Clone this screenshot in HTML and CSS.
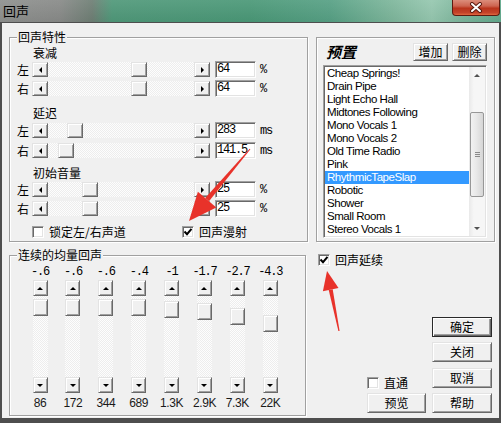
FILE: index.html
```html
<!DOCTYPE html>
<html lang="zh-CN">
<head>
<meta charset="utf-8">
<title>回声</title>
<link rel="stylesheet" href="styles.css">
</head>
<body>
<div class="window">
  <div class="titlebar">
    <span class="title">回声</span>
    <div class="close">
      <svg width="14" height="11" viewBox="0 0 14 11"><path d="M3 2 L11 9 M11 2 L3 9" stroke="#5a1a10" stroke-width="4" stroke-linecap="round"/><path d="M3 2 L11 9 M11 2 L3 9" stroke="#fff" stroke-width="2" stroke-linecap="round"/></svg>
    </div>
  </div>
  <div class="client">
    <div class="left-col">
      <fieldset class="group g-echo">
        <legend>回声特性</legend>
        <div class="section">
          <div class="sec-label">衰减</div>
          <div class="row">
            <span class="side">左</span>
            <div class="hscroll"><span class="sbtn raised a-left"></span><div class="htrack"><span class="thumb raised" style="margin-left:83px"></span></div><span class="sbtn raised a-right"></span></div>
            <span class="textbox">64</span><span class="unit">%</span>
          </div>
          <div class="row">
            <span class="side">右</span>
            <div class="hscroll"><span class="sbtn raised a-left"></span><div class="htrack"><span class="thumb raised" style="margin-left:83px"></span></div><span class="sbtn raised a-right"></span></div>
            <span class="textbox">64</span><span class="unit">%</span>
          </div>
        </div>
        <div class="section section-loose">
          <div class="sec-label">延迟</div>
          <div class="row">
            <span class="side">左</span>
            <div class="hscroll"><span class="sbtn raised a-left"></span><div class="htrack"><span class="thumb raised" style="margin-left:19px"></span></div><span class="sbtn raised a-right"></span></div>
            <span class="textbox">283</span><span class="unit">ms</span>
          </div>
          <div class="row">
            <span class="side">右</span>
            <div class="hscroll"><span class="sbtn raised a-left"></span><div class="htrack"><span class="thumb raised" style="margin-left:10px"></span></div><span class="sbtn raised a-right"></span></div>
            <span class="textbox">141.5</span><span class="unit">ms</span>
          </div>
        </div>
        <div class="section">
          <div class="sec-label">初始音量</div>
          <div class="row">
            <span class="side">左</span>
            <div class="hscroll"><span class="sbtn raised a-left"></span><div class="htrack"><span class="thumb raised" style="margin-left:34px"></span></div><span class="sbtn raised a-right"></span></div>
            <span class="textbox">25</span><span class="unit">%</span>
          </div>
          <div class="row">
            <span class="side">右</span>
            <div class="hscroll"><span class="sbtn raised a-left"></span><div class="htrack"><span class="thumb raised" style="margin-left:34px"></span></div><span class="sbtn raised a-right"></span></div>
            <span class="textbox">25</span><span class="unit">%</span>
          </div>
        </div>
        <div class="check-row">
          <label class="check check-wide"><span class="cbox"></span><span>锁定左/右声道</span></label>
          <label class="check"><span class="cbox"><svg width="10" height="10" viewBox="0 0 10 10"><path d="M1.5 4.5 L4 7.2 L8.5 1.8" fill="none" stroke="#000" stroke-width="2"/></svg></span><span>回声漫射</span></label>
        </div>
      </fieldset>

      <fieldset class="group g-eq">
        <legend>连续的均量回声</legend>
        <div class="eq">
          <div class="band"><span class="band-val">-.6</span><div class="vscroll"><span class="vbtn raised a-up"></span><div class="vtrack"><span class="vthumb raised" style="margin-top:3px"></span></div><span class="vbtn raised a-down"></span></div><span class="band-freq">86</span></div>
          <div class="band"><span class="band-val">-.6</span><div class="vscroll"><span class="vbtn raised a-up"></span><div class="vtrack"><span class="vthumb raised" style="margin-top:3px"></span></div><span class="vbtn raised a-down"></span></div><span class="band-freq">172</span></div>
          <div class="band"><span class="band-val">-.6</span><div class="vscroll"><span class="vbtn raised a-up"></span><div class="vtrack"><span class="vthumb raised" style="margin-top:3px"></span></div><span class="vbtn raised a-down"></span></div><span class="band-freq">344</span></div>
          <div class="band"><span class="band-val">-.4</span><div class="vscroll"><span class="vbtn raised a-up"></span><div class="vtrack"><span class="vthumb raised" style="margin-top:3px"></span></div><span class="vbtn raised a-down"></span></div><span class="band-freq">689</span></div>
          <div class="band"><span class="band-val">-1</span><div class="vscroll"><span class="vbtn raised a-up"></span><div class="vtrack"><span class="vthumb raised" style="margin-top:5px"></span></div><span class="vbtn raised a-down"></span></div><span class="band-freq">1.3K</span></div>
          <div class="band"><span class="band-val">-1.7</span><div class="vscroll"><span class="vbtn raised a-up"></span><div class="vtrack"><span class="vthumb raised" style="margin-top:7px"></span></div><span class="vbtn raised a-down"></span></div><span class="band-freq">2.9K</span></div>
          <div class="band"><span class="band-val">-2.7</span><div class="vscroll"><span class="vbtn raised a-up"></span><div class="vtrack"><span class="vthumb raised" style="margin-top:12px"></span></div><span class="vbtn raised a-down"></span></div><span class="band-freq">7.3K</span></div>
          <div class="band"><span class="band-val">-4.3</span><div class="vscroll"><span class="vbtn raised a-up"></span><div class="vtrack"><span class="vthumb raised" style="margin-top:19px"></span></div><span class="vbtn raised a-down"></span></div><span class="band-freq">22K</span></div>
        </div>
      </fieldset>
    </div>

    <div class="right-col">
      <div class="preset">
        <div class="preset-head">
          <span class="preset-title">预置</span>
          <span class="btn raised btn-add">增加</span>
          <span class="btn raised btn-del">删除</span>
        </div>
        <div class="list">
          <ul class="items">
            <li>Cheap Springs!</li>
            <li>Drain Pipe</li>
            <li>Light Echo Hall</li>
            <li>Midtones Following</li>
            <li>Mono Vocals 1</li>
            <li>Mono Vocals 2</li>
            <li>Old Time Radio</li>
            <li>Pink</li>
            <li class="sel">RhythmicTapeSlap</li>
            <li>Robotic</li>
            <li>Shower</li>
            <li>Small Room</li>
            <li>Stereo Vocals 1</li>
          </ul>
          <div class="lscroll">
            <span class="lbtn l-up"></span>
            <div class="ltrack"><span class="lthumb"></span></div>
            <span class="lbtn l-down"></span>
          </div>
        </div>
      </div>

      <label class="check cont-check"><span class="cbox"><svg width="10" height="10" viewBox="0 0 10 10"><path d="M1.5 4.5 L4 7.2 L8.5 1.8" fill="none" stroke="#000" stroke-width="2"/></svg></span><span>回声延续</span></label>

      <div class="bottom">
        <div class="bottom-left">
          <label class="check"><span class="cbox"></span><span>直通</span></label>
          <span class="btn raised wide">预览</span>
        </div>
        <div class="bottom-right">
          <span class="btn raised wide default">确定</span>
          <span class="btn raised wide">关闭</span>
          <span class="btn raised wide">取消</span>
          <span class="btn raised wide">帮助</span>
        </div>
      </div>
    </div>
  </div>
</div>

<svg class="annot" width="501" height="423" viewBox="0 0 501 423">
  <polygon points="205.2,198 209,201.2 250.4,149.3 249.6,148.7" fill="#e8322a"/>
  <polygon points="189,221 197.9,191.8 216.3,207.4" fill="#e8322a"/>
  <polygon points="328.7,290 332.7,289.2 339.6,330.9 338.4,331.1" fill="#e8322a"/>
  <polygon points="327,271 322.9,291.2 338.5,288" fill="#e8322a"/>
</svg>
</body>
</html>
```

FILE: styles.css
```css
* { box-sizing: border-box; }

html, body {
  margin: 0;
  padding: 0;
}

body {
  width: 501px;
  height: 423px;
  overflow: hidden;
  position: relative;
  background: #f0f0f0;
  font-family: "Noto Sans CJK SC", "Liberation Sans", sans-serif;
  font-size: 12px;
  color: #000;
}

.window {
  display: flex;
  flex-direction: column;
  width: 501px;
  height: 423px;
}

/* ---------- title bar ---------- */
.titlebar {
  flex: none;
  height: 22px;
  display: flex;
  align-items: flex-start;
  background:
    linear-gradient(180deg, rgba(255,255,255,0.08), rgba(0,0,0,0.04)),
    linear-gradient(90deg, #8e908e 0px, #888a88 60px, #6e7e74 92px, #4f9879 112px, #4a9877 250px, #56a084 330px, #7db69b 392px, #95c7af 432px, #7cb69c 462px, #62aa8d 501px);
}

.title {
  margin: 3px 0 0 3px;
  font-size: 13px;
  line-height: 15px;
}

.close {
  margin-left: auto;
  margin-right: 1px;
  width: 48px;
  height: 16px;
  border: 1px solid #5e1a10;
  border-top: none;
  border-radius: 0 0 4px 4px;
  background: linear-gradient(180deg, #dc8d7b 0%, #cd6450 40%, #b9341c 55%, #c4432a 85%, #e0683e 100%);
  display: flex;
  align-items: center;
  justify-content: center;
}

/* ---------- client ---------- */
.client {
  flex: 1;
  display: flex;
  gap: 8px;
  border-style: solid;
  border-color: #4e4e4e;
  border-width: 1px 2px 5px 2px;
  padding: 7px 0 2px 7px;
  background: #f0f0f0;
}

.left-col {
  width: 299px;
  display: flex;
  flex-direction: column;
}

.group {
  margin: 0;
  padding: 2px 0 0 7px;
  min-width: 0;
  border: 1px solid #a0a0a0;
  box-shadow: inset 1px 1px 0 #fff, 1px 1px 0 #fff;
}

.group legend {
  margin: 0;
  padding: 0 1px;
  font-size: 12px;
  line-height: 14px;
  background: #f0f0f0;
}

.g-echo {
  width: 299px;
  height: 212px;
}

.g-eq {
  width: 297px;
  height: 168px;
  margin-top: 6px;
  padding-top: 4px;
}

/* ---------- 3D look ---------- */
.raised {
  background: #f0f0f0;
  border: 1px solid;
  border-color: #e3e3e3 #696969 #696969 #e3e3e3;
  box-shadow: inset 1px 1px 0 #fff, inset -1px -1px 0 #a0a0a0;
}

/* ---------- echo sliders ---------- */
.section {
  display: flex;
  flex-direction: column;
}

.section + .section {
  margin-top: 9px;
}

.section-loose + .section {
  margin-top: 7px;
}

.sec-label {
  height: 14px;
  line-height: 14px;
  padding-left: 16px;
}

.row {
  display: flex;
  align-items: center;
  height: 17px;
  margin-top: 2px;
}

.sec-label + .row {
  margin-top: 1px;
}

.section-loose .sec-label + .row {
  margin-top: 2px;
}

.section-loose .row + .row {
  margin-top: 3px;
}

.side {
  width: 15px;
  line-height: 14px;
}

.hscroll {
  display: flex;
  width: 178px;
  height: 15px;
}

.sbtn {
  flex: none;
  width: 16px;
  height: 15px;
  display: flex;
  align-items: center;
  justify-content: center;
}

.sbtn::before,
.vbtn::before {
  content: "";
  width: 0;
  height: 0;
  border: 3px solid transparent;
}

.a-left::before { border-right-color: #000; border-left-width: 0; }
.a-right::before { border-left-color: #000; border-right-width: 0; }
.a-up::before { border-bottom-color: #000; border-top-width: 0; }
.a-down::before { border-top-color: #000; border-bottom-width: 0; }

.htrack {
  flex: 1;
  display: flex;
  background: repeating-conic-gradient(#ededed 0 25%, #fdfdfd 0 50%) 0 0 / 2px 2px;
}

.thumb {
  flex: none;
  width: 16px;
  height: 15px;
}

.textbox {
  width: 41px;
  height: 17px;
  margin-left: 5px;
  padding-left: 1px;
  background: #fff;
  border: 1px solid;
  border-color: #a0a0a0 #fff #fff #a0a0a0;
  box-shadow: inset 1px 1px 0 #696969, inset -1px -1px 0 #e3e3e3;
  font-family: "Liberation Mono", monospace;
  font-size: 12px;
  letter-spacing: -1.2px;
  line-height: 15px;
}

.unit {
  margin-left: 4px;
  font-family: "Liberation Mono", monospace;
  font-size: 12px;
  letter-spacing: -1.2px;
}

/* ---------- checkboxes ---------- */
.check-row {
  display: flex;
  margin-top: 8px;
  padding-left: 15px;
}

.check {
  display: flex;
  align-items: center;
  gap: 5px;
  line-height: 14px;
  height: 14px;
}

.check-wide {
  width: 150px;
}

.cbox {
  flex: none;
  width: 12px;
  height: 12px;
  background: #fff;
  border: 1px solid;
  border-color: #a0a0a0 #fff #fff #a0a0a0;
  box-shadow: inset 1px 1px 0 #696969, inset -1px -1px 0 #e3e3e3;
  display: flex;
  align-items: center;
  justify-content: center;
}

.cbox svg {
  display: block;
}

/* ---------- EQ ---------- */
.eq {
  display: grid;
  grid-template-columns: repeat(8, 32.9px);
  margin-left: 6.6px;
}

.band {
  display: flex;
  flex-direction: column;
  align-items: center;
}

.band-val {
  height: 12px;
  line-height: 12px;
  font-family: "Liberation Mono", monospace;
  font-size: 12px;
  letter-spacing: -1.2px;
  white-space: pre;
}

.vscroll {
  margin-top: 2px;
  width: 15px;
  display: flex;
  flex-direction: column;
}

.vbtn {
  height: 16px;
  display: flex;
  align-items: center;
  justify-content: center;
}

.vtrack {
  height: 81px;
  display: flex;
  flex-direction: column;
  background: repeating-conic-gradient(#ededed 0 25%, #fdfdfd 0 50%) 0 0 / 2px 2px;
}

.vthumb {
  flex: none;
  height: 17px;
}

.band-freq {
  margin-top: 3px;
  font-family: "Liberation Sans", sans-serif;
  font-size: 12px;
  line-height: 14px;
  letter-spacing: -0.4px;
  color: #1a1a1a;
}

/* ---------- right column ---------- */
.right-col {
  width: 179px;
  display: flex;
  flex-direction: column;
}

.preset {
  margin-top: 7px;
  height: 205px;
  border: 1px solid #a0a0a0;
  box-shadow: inset 1px 1px 0 #fff, 1px 1px 0 #fff;
  padding: 4px 7px 3px 6px;
  display: flex;
  flex-direction: column;
}

.preset-head {
  height: 20px;
  display: flex;
  align-items: center;
}

.preset-title {
  margin-left: 3px;
  font-size: 15px;
  font-weight: bold;
  font-style: italic;
  line-height: 16px;
}

.btn {
  display: flex;
  align-items: center;
  justify-content: center;
  font-size: 12px;
  line-height: 14px;
}

.preset-head .btn {
  width: 35px;
  height: 18px;
}

.btn-add {
  margin-left: auto;
}

.btn-del {
  margin-left: 4px;
}

.list {
  margin-top: 3px;
  height: 173px;
  display: flex;
  background: #fff;
  border: 1px solid;
  border-color: #a0a0a0 #fff #fff #a0a0a0;
  box-shadow: inset 1px 1px 0 #696969, inset -1px -1px 0 #e3e3e3;
  padding: 1px;
}

.items {
  flex: 1;
  margin: 0;
  padding: 0;
  list-style: none;
}

.items li {
  height: 13px;
  line-height: 13px;
  padding-left: 2px;
  font-family: "Liberation Sans", sans-serif;
  font-size: 11.5px;
  letter-spacing: -0.45px;
  white-space: nowrap;
}

.items li.sel {
  background: #3399ff;
  color: #fff;
}

.lscroll {
  width: 16px;
  display: flex;
  flex-direction: column;
  background: linear-gradient(90deg, #e9e9e9, #f6f6f6 30%, #f6f6f6);
}

.lbtn {
  height: 16px;
  display: flex;
  align-items: center;
  justify-content: center;
}

.lbtn::before {
  content: "";
  width: 0;
  height: 0;
  border: 3px solid transparent;
}

.l-up::before { border-bottom-color: #505050; border-top-width: 0; }
.l-down::before { border-top-color: #505050; border-bottom-width: 0; }

.ltrack {
  flex: 1;
  display: flex;
  flex-direction: column;
}

.lthumb {
  margin: 29px 1px 0 1px;
  height: 85px;
  border: 1px solid #979797;
  border-radius: 2px;
  background:
    linear-gradient(180deg, transparent 39px, #8a8a8a 39px, #8a8a8a 40px, transparent 40px, transparent 41px, #8a8a8a 41px, #8a8a8a 42px, transparent 42px, transparent 43px, #8a8a8a 43px, #8a8a8a 44px, transparent 44px) 4px 0 / 5px 100% no-repeat,
    linear-gradient(90deg, #f2f2f2, #e8e8e8 45%, #d6d6d6);
}

.cont-check {
  margin-top: 11px;
  padding-left: 2px;
}

.bottom {
  margin-top: auto;
  display: flex;
  justify-content: flex-end;
  align-items: flex-end;
  gap: 6px;
  padding: 0 3px 3px 0;
}

.bottom-left {
  width: 59px;
  display: flex;
  flex-direction: column;
}

.bottom-left .check {
  margin-bottom: 3px;
}

.bottom-right {
  width: 60px;
  display: flex;
  flex-direction: column;
  gap: 5.33px;
}

.btn.wide {
  height: 20px;
  width: 100%;
}

.btn.default {
  border-color: #2a2a2a;
  box-shadow: inset 1px 1px 0 #fff, inset -1px -1px 0 #696969, inset -2px -2px 0 #a0a0a0;
}

/* ---------- annotation arrows ---------- */
.annot {
  position: absolute;
  left: 0;
  top: 0;
  pointer-events: none;
}
```
